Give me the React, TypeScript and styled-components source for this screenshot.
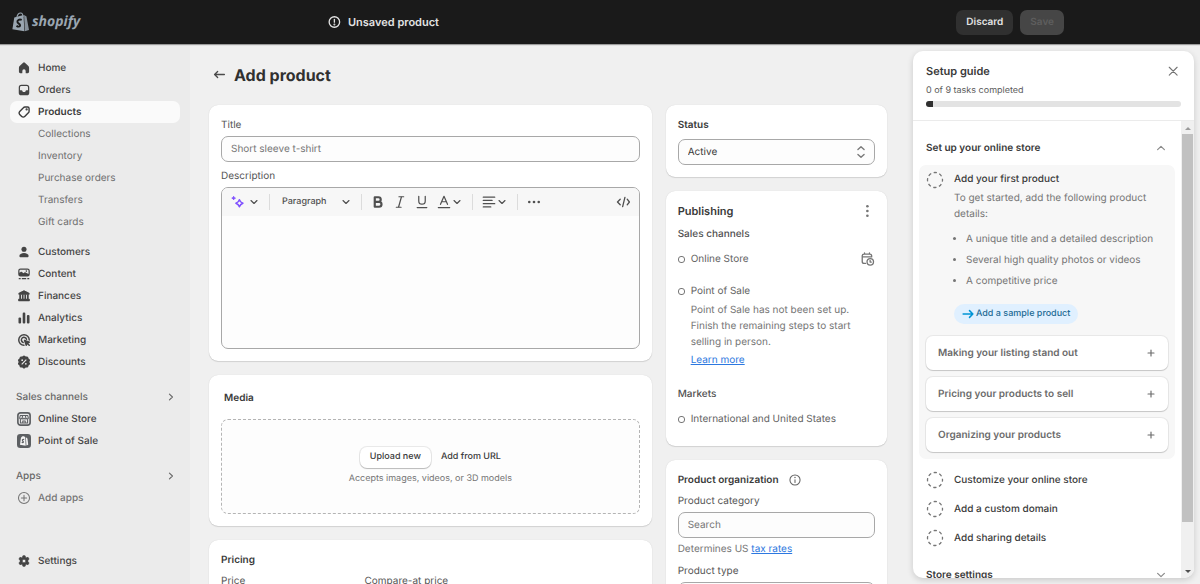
import React from "react";
import styled, { createGlobalStyle, css } from "styled-components";

const Global = createGlobalStyle`
  *, *::before, *::after { box-sizing: border-box; }
  body { margin: 0; background: #f0f0f0; }
  body, button, input, select, textarea {
    font-family: Inter, "Liberation Sans", sans-serif;
    font-size: 10px;
    line-height: 16px;
    color: #3a3a3a;
    text-rendering: geometricPrecision;
  }
  button { border: 0; padding: 0; background: none; cursor: pointer; }
  h1, h2, h3, p, ul { margin: 0; padding: 0; }
  ul { list-style: none; }
`;

/* ---------- Icons ---------- */

const Svg = styled.svg<{ $size?: number }>`
  display: block;
  flex: none;
  width: ${(p) => p.$size ?? 14}px;
  height: ${(p) => p.$size ?? 14}px;
`;

type IconProps = { size?: number };

const Line = ({ size, width = 1.5, children }: IconProps & { width?: number; children: React.ReactNode }) => (
  <Svg $size={size} viewBox="0 0 16 16" fill="none" stroke="currentColor" strokeWidth={width} strokeLinecap="round" strokeLinejoin="round" aria-hidden="true">
    {children}
  </Svg>
);

const Solid = ({ size, children }: IconProps & { children: React.ReactNode }) => (
  <Svg $size={size} viewBox="0 0 16 16" fill="currentColor" aria-hidden="true">
    {children}
  </Svg>
);

const HomeIcon = () => (
  <Solid>
    <path d="M7 2a1.500 1.500 0 0 1 2 0l4 3.800c.5.5.8 1.100.8 1.800v4.700c0 .9-.7 1.600-1.600 1.600h-1.700a.6.6 0 0 1-.6-.6v-1.900a1.900 1.900 0 0 0-3.800 0v1.900a.6.6 0 0 1-.6.6H3.800a1.600 1.600 0 0 1-1.600-1.600V7.600c0-.7.3-1.300.8-1.800z" />
  </Solid>
);

const OrdersIcon = () => (
  <Solid>
    <path fillRule="evenodd" d="M5 2h6a3 3 0 0 1 3 3v6a3 3 0 0 1-3 3H5a3 3 0 0 1-3-3V5a3 3 0 0 1 3-3zM5 3.400c-.9 0-1.600.7-1.600 1.600v3.400h1.700c.5 0 .9.300 1.100.7l.2.500c.2.400.5.600.9.600h1.400c.4 0 .7-.2.900-.6l.2-.5c.2-.4.6-.7 1.100-.7h1.700V5c0-.9-.7-1.600-1.600-1.600z" />
  </Solid>
);

const ProductsIcon = () => (
  <Line width={1.600}>
    <path d="M9 2.300h3.200c.9 0 1.600.7 1.600 1.600V7c0 .7-.3 1.400-.8 1.900l-4.200 4.300a2.400 2.400 0 0 1-3.400 0l-2.300-2.300a2.400 2.400 0 0 1 0-3.400l4.200-4.300c.5-.6 1.100-.9 1.700-.9z" />
    <circle cx="11" cy="5.100" r=".5" fill="currentColor" />
  </Line>
);

const CustomersIcon = () => (
  <Solid>
    <circle cx="8" cy="4.900" r="2.900" />
    <path d="M8 9c3 0 5.300 1.500 5.300 3.500 0 1-.7 1.500-1.700 1.500H4.400c-1 0-1.700-.5-1.700-1.500C2.700 10.500 5 9 8 9z" />
  </Solid>
);

const ContentIcon = () => (
  <Solid>
    <path fillRule="evenodd" d="M4 1.600h8a2.600 2.600 0 0 1 2.600 2.600v4a2.600 2.600 0 0 1-2.600 2.600H4a2.600 2.600 0 0 1-2.600-2.600v-4A2.600 2.600 0 0 1 4 1.600zM4 3c-.7 0-1.200.6-1.200 1.200v2.300l1.400-.9c.5-.3 1-.3 1.500.1l1.600 1.300 1.200-.8c.4-.3.9-.3 1.300 0l3.400 1.700V4.200c0-.6-.5-1.200-1.200-1.200z" />
    <circle cx="10.700" cy="4.700" r=".9" />
    <path d="M2 12.600h2.200V14H2zM5.500 12.600h5V14h-5zM11.800 12.600H14V14h-2.200z" />
  </Solid>
);

const FinancesIcon = () => (
  <Solid>
    <path d="M7.300 1.700c.4-.2 1-.2 1.400 0l5.100 2.700c.4.300.7.700.7 1.100 0 .6-.5 1.100-1.100 1.100H2.600c-.6 0-1.100-.5-1.100-1.100 0-.4.300-.8.700-1.100z" />
    <path d="M2.600 6h2v6h-2zM5.600 6h1.900v6H5.600zM8.500 6h1.900v6H8.500zM11.400 6h2v6h-2z" />
    <path d="M2.100 11.200h11.800c.4 0 .8.400.8.800v1.200c0 .4-.4.800-.8.800H2.100a.8.800 0 0 1-.8-.8V12c0-.4.400-.8.800-.8z" />
  </Solid>
);

const AnalyticsIcon = () => (
  <Solid>
    <rect x="1.700" y="7.500" width="3" height="6.800" rx="1.200" />
    <rect x="6.500" y="1.800" width="3" height="12.500" rx="1.200" />
    <rect x="11.300" y="4.500" width="3" height="9.800" rx="1.200" />
  </Solid>
);

const MarketingIcon = () => (
  <Line width={1.700}>
    <path d="M14 8a6 6 0 1 0-6 6" />
    <path d="M10.900 7.200A3 3 0 1 0 7 10.800" />
    <path d="M8.600 8.400l5.500 2-2.200 1.300-1.300 2.300z" fill="currentColor" />
    <path d="M12.500 12.500l1.500 1.500" />
  </Line>
);

const DiscountsIcon = () => (
  <Solid>
    <path fillRule="evenodd" d="M6.700 1.200a1.900 1.900 0 0 1 2.600 0l.6.600.9-.1a1.900 1.900 0 0 1 2.300 1.700l.1.700.7.500a1.900 1.900 0 0 1 .5 2.700L14 8l.4.700a1.900 1.900 0 0 1-.5 2.700l-.7.5-.1.700a1.900 1.900 0 0 1-2.300 1.700l-.9-.1-.6.600a1.900 1.900 0 0 1-2.600 0l-.6-.6-.9.100a1.900 1.900 0 0 1-2.300-1.700l-.1-.7-.7-.5a1.900 1.900 0 0 1-.5-2.700L2 8l-.4-.7a1.900 1.900 0 0 1 .5-2.700l.7-.5.1-.7a1.900 1.900 0 0 1 2.300-1.700l.9.100zM5.900 4.900a1 1 0 1 0 0 2 1 1 0 0 0 0-2zm4.200 4.200a1 1 0 1 0 0 2 1 1 0 0 0 0-2zm.1-4.200L4.900 10.200l.9.900 5.300-5.300z" />
  </Solid>
);

const StoreBadge = () => (
  <Svg viewBox="0 0 16 16" fill="none" aria-hidden="true">
    <rect x="1" y="1" width="14" height="14" rx="3" fill="#ebebeb" stroke="#5c5f62" strokeWidth="1.900" />
    <path d="M3.800 3.900h8.400l.8 3a1.300 1.300 0 0 1-2.500 0 1.300 1.300 0 0 1-2.500 0 1.300 1.300 0 0 1-2.500 0 1.300 1.300 0 0 1-2.500 0zM3.900 8.300v4.200h8.200V8.300M6.600 12.500v-2.200h2.800v2.200M6.200 3.900v2.700M9.800 3.900v2.700" stroke="#5c5f62" strokeWidth="1.200" strokeLinejoin="round" />
  </Svg>
);

const PosBadge = () => (
  <Svg viewBox="0 0 16 16" aria-hidden="true">
    <rect width="16" height="16" rx="3.800" fill="#5c5f62" />
    <path d="M4.500 4.600C5 3 6.500 2.200 8 2.700l1.400.9.500 9.900-6.500-1.200z" fill="#f4f4f4" />
    <path d="M10.200 3.800l1.700 1.200.9 7.300-2 .9z" fill="#f4f4f4" />
    <path d="M8.200 6.400c-1.300-.7-2.400.1-2 1.100.3.800 1.300 1 1.100 1.800-.2.700-1.200.6-1.900.1" stroke="#5c5f62" strokeWidth="1.300" fill="none" />
  </Svg>
);

const PlusCircleIcon = () => (
  <Line width={1.200}>
    <circle cx="8" cy="8" r="6.300" />
    <path d="M8 5v6M5 8h6" />
  </Line>
);

const GearIcon = () => (
  <Solid>
    <path fillRule="evenodd" d="M6.800 2h2.400l.5 1.700 1.100.6 1.800-.5 1.200 2-1.300 1.300v1.800l1.300 1.300-1.200 2-1.800-.5-1.100.6L9.200 14H6.800l-.5-1.700-1.100-.6-1.800.5-1.200-2 1.300-1.300V7.100L2.200 5.800l1.200-2 1.800.5 1.100-.6zM8 5.900a2.100 2.100 0 1 0 0 4.200 2.100 2.100 0 0 0 0-4.200z" stroke="currentColor" strokeWidth=".8" strokeLinejoin="round" />
  </Solid>
);

const AlertIcon = () => (
  <Line size={14} width={1.500}>
    <circle cx="7.300" cy="8" r="6" />
    <path d="M7.300 5v3.200" />
    <circle cx="7.300" cy="10.800" r=".4" fill="currentColor" />
  </Line>
);

const InfoIcon = () => (
  <Line size={14} width={1.200}>
    <circle cx="8" cy="8" r="5.800" />
    <path d="M8 7.600v3.200" />
    <circle cx="8" cy="5.200" r=".3" fill="currentColor" />
  </Line>
);

const BackIcon = () => (
  <Line size={14} width={1.500}>
    <path d="M13 7.400H2M5.300 4L1.800 7.400l3.500 3.400" />
  </Line>
);

const ChevronDown = ({ size = 10 }: IconProps) => (
  <Line size={size} width={2}>
    <path d="M3.200 5.700L8 10.300l4.800-4.600" />
  </Line>
);

const ChevronUp = ({ size = 12 }: IconProps) => (
  <Line size={size} width={1.600}>
    <path d="M3.500 10.200L8 5.800l4.500 4.400" />
  </Line>
);

const ChevronThinDown = () => (
  <Line size={12} width={1.600}>
    <path d="M3.500 5.800L8 10.200l4.500-4.400" />
  </Line>
);

const ChevronRight = () => (
  <Line size={10} width={1.800}>
    <path d="M5.500 3.500L10.300 8l-4.800 4.500" />
  </Line>
);

const SparkleIcon = () => (
  <Svg $size={14} viewBox="0 0 16 16" fill="none" aria-hidden="true">
    <path d="M9.600 5.400c.8 2.400 1.600 3.200 4 4-2.400.8-3.200 1.600-4 4-.8-2.400-1.600-3.200-4-4 2.400-.8 3.200-1.600 4-4z" stroke="#8051ff" strokeWidth="1.800" strokeLinejoin="round" />
    <path d="M3 1.500c.4 1.300.8 1.700 2.100 2.100C3.800 4 3.400 4.400 3 5.700 2.600 4.400 2.200 4 .9 3.600 2.200 3.200 2.600 2.800 3 1.500z" fill="#8051ff" stroke="#8051ff" strokeWidth="1" strokeLinejoin="round" />
  </Svg>
);

const BoldIcon = () => (
  <Line size={14} width={2.500}>
    <path d="M4.300 2.600h4.200a2.600 2.600 0 0 1 0 5.200H4.300zM4.300 7.800h4.900a2.800 2.800 0 0 1 0 5.600H4.300z" />
  </Line>
);

const ItalicIcon = () => (
  <Line size={14} width={1.400}>
    <path d="M6.800 2h5.400M3.800 14h5.400M9.700 2L6.300 14" />
  </Line>
);

const UnderlineIcon = () => (
  <Line size={14} width={1.400}>
    <path d="M4.300 1.500v5.300a3.700 3.700 0 0 0 7.400 0V1.500M2.500 14.300h11" />
  </Line>
);

const TextColorIcon = () => (
  <Line size={14} width={1.400}>
    <path d="M4 10.700l4-9.200 4 9.200M5.300 7.700h5.400M1.500 14.300h13" />
  </Line>
);

const AlignIcon = () => (
  <Line size={14} width={1.500}>
    <path d="M1.500 2.500h13M1.500 6.200h10M1.500 9.900h13M1.500 13.600h8.500" />
  </Line>
);

const MoreIcon = () => (
  <Solid size={14}>
    <circle cx="2.600" cy="8" r="1.500" />
    <circle cx="8" cy="8" r="1.500" />
    <circle cx="13.400" cy="8" r="1.500" />
  </Solid>
);

const KebabIcon = () => (
  <Solid size={14}>
    <circle cx="7.300" cy="2.600" r="1.500" />
    <circle cx="7.300" cy="8" r="1.500" />
    <circle cx="7.300" cy="13.400" r="1.500" />
  </Solid>
);

const CodeIcon = () => (
  <Line size={14} width={1.500}>
    <path d="M4.800 4.800L1.700 8l3.100 3.200M12.800 4.800L15.300 8l-2.500 3.200M10.200 2.800L7.600 13.200" />
  </Line>
);

const CalendarClockIcon = () => (
  <Line size={14} width={1.500}>
    <path d="M5.200 13H3.600a2.200 2.200 0 0 1-2.200-2.200V4.700c0-1.200 1-2.200 2.200-2.200h6.400c1.200 0 2.200 1 2.200 2.200v.6M1.400 5.600h10.800M4 1v1.500M9.700 1v1.500" />
    <circle cx="10.600" cy="11.200" r="3.700" />
    <path d="M10.400 9.500v2h1.400" />
  </Line>
);

const SelectArrows = () => (
  <Line size={14} width={1.600}>
    <path d="M4.500 5.200L8 1.900l3.500 3.300M4.500 10.800L8 14.100l3.500-3.300" />
  </Line>
);

const CloseIcon = () => (
  <Line size={12} width={1.500}>
    <path d="M3 3l10.500 10.500M13.500 3L3 13.500" />
  </Line>
);

const PlusIcon = () => (
  <Line size={8} width={2.300}>
    <path d="M8 2v12M2 8h12" />
  </Line>
);

const ArrowRightIcon = () => (
  <Line size={12} width={2}>
    <path d="M1.500 8h13M10 3.500L14.500 8 10 12.500" />
  </Line>
);

const DashedCircle = () => (
  <Svg $size={18} viewBox="0 0 18 18" fill="none" aria-hidden="true">
    <circle cx="9" cy="9" r="7.500" stroke="#767676" strokeWidth="1.300" strokeDasharray="3.300 2.590" strokeDashoffset="1.600" strokeLinecap="butt" />
  </Svg>
);

/* ---------- Top bar ---------- */

const TopBar = styled.header`
  display: flex;
  flex: none;
  height: 44px;
  background: #1a1a1a;
  box-shadow: 0 1px 1px rgba(0, 0, 0, 0.35);
  z-index: 1;
`;

const Brand = styled.a`
  display: flex;
  align-items: center;
  gap: 1px;
  width: 190px;
  padding-left: 11px;
  color: #9aa6b1;
  text-decoration: none;
`;

const BrandName = styled.span`
  font: italic 700 14px/20px "Open Sans", sans-serif;
`;

const SaveBarSlot = styled.div`
  flex: 1;
  padding: 0 136px 0 138px;
`;

const SaveBar = styled.div`
  display: flex;
  align-items: center;
  gap: 7px;
  height: 100%;
  max-width: 736px;
  margin: 0 auto;
`;

const SaveTitle = styled.strong`
  display: flex;
  align-items: center;
  gap: 6px;
  margin-right: auto;
  font-size: 11px;
  font-weight: 600;
  color: #e3e3e3;
`;

const BarButton = styled.button<{ $muted?: boolean }>`
  height: 25px;
  padding: 0 10px;
  border-radius: 7px;
  font-weight: 600;
  background: ${(p) => (p.$muted ? "#464646" : "#303030")};
  color: ${(p) => (p.$muted ? "#5e5e5e" : "#e3e3e3")};
`;

/* ---------- Frame ---------- */

const Frame = styled.div`
  display: flex;
  flex-direction: column;
  height: 100vh;
  overflow: hidden;
`;

const Body = styled.div`
  display: flex;
  flex: 1;
  min-height: 0;
`;

/* ---------- Sidebar ---------- */

const Sidebar = styled.nav`
  display: flex;
  flex: none;
  flex-direction: column;
  width: 190px;
  padding: 13px 10px 12px;
  background: #ebebeb;
  overflow: hidden;
`;

const NavGroup = styled.ul<{ $gap?: number }>`
  margin-top: ${(p) => p.$gap ?? 0}px;
`;

const NavLink = styled.a<{ $active?: boolean; $sub?: boolean; $muted?: boolean }>`
  display: flex;
  align-items: center;
  gap: 7px;
  height: 22px;
  padding-left: ${(p) => (p.$sub ? 28 : 7)}px;
  border-radius: 7px;
  font-weight: 500;
  text-decoration: none;
  color: #444;
  ${(p) => p.$active && css`background: #fafafa; font-weight: 600; color: #3a3a3a;`}
  ${(p) => p.$sub && css`font-weight: 400; color: #6f6f6f;`}
  ${(p) => p.$muted && css`color: #757575;`}
`;

const NavHeading = styled.button`
  display: flex;
  align-items: center;
  justify-content: space-between;
  width: 100%;
  height: 22px;
  padding: 0 4px 0 6px;
  margin-top: 13px;
  font-weight: 500;
  color: #686868;
`;

const SidebarFooter = styled.div`
  margin-top: auto;
`;

/* ---------- Page ---------- */

const Page = styled.main`
  flex: 1;
  min-width: 0;
  padding: 20px 26px 0 19px;
  overflow: hidden;
`;

const PageHeader = styled.div`
  display: flex;
  align-items: center;
  gap: 7px;
  height: 22px;
  margin-bottom: 19px;
  padding-left: 4px;
  color: #4a4a4a;
`;

const PageTitle = styled.h1`
  font-size: 16px;
  line-height: 22px;
  font-weight: 700;
  color: #303030;
`;

const Columns = styled.div`
  display: grid;
  grid-template-columns: minmax(0, 2fr) minmax(0, 1fr);
  gap: 14px;
`;

const Column = styled.div`
  display: flex;
  flex-direction: column;
  gap: 14px;
`;

const Card = styled.section`
  padding: 12px;
  border-radius: 9px;
  background: #fff;
  box-shadow: 0 1px 1px rgba(0, 0, 0, 0.12), 0 0 1px rgba(0, 0, 0, 0.15);
`;

const Field = styled.div`
  display: flex;
  flex-direction: column;
  gap: 3px;
`;

const Fields = styled.div`
  display: flex;
  flex-direction: column;
  gap: 6px;
`;

const Label = styled.label`
  color: #555;
`;

const inputBox = css`
  width: 100%;
  height: 26px;
  padding: 0 9px;
  border: 1px solid #a8a8a8;
  border-radius: 7px;
  background: #fdfdfd;
  outline: 0;
`;

const TextInput = styled.input`
  ${inputBox}

  &::placeholder {
    color: #767676;
    opacity: 1;
  }
`;

const Editor = styled.div`
  display: flex;
  flex-direction: column;
  border: 1px solid #a8a8a8;
  border-radius: 7px;
  background: #fdfdfd;
  overflow: hidden;
`;

const Toolbar = styled.div`
  display: flex;
  align-items: center;
  height: 28px;
  padding: 0 9px;
  background: #f7f7f7;
  color: #505050;
`;

const ToolButton = styled.button<{ $gap?: number; $first?: boolean; $wide?: boolean }>`
  display: flex;
  align-items: center;
  gap: ${(p) => p.$gap ?? 1}px;
  margin-left: ${(p) => (p.$first ? 0 : 8)}px;
  padding-left: ${(p) => (p.$wide ? 3 : 0)}px;
  font-size: 9px;
  font-weight: 500;
  color: inherit;
`;

const ToolDivider = styled.span`
  width: 1px;
  height: 16px;
  margin: 0 1px 0 10px;
  background: #dcdcdc;
`;

const ToolSpacer = styled.span`
  flex: 1;
`;

const EditorArea = styled.textarea`
  height: 132px;
  padding: 8px 10px;
  border: 0;
  background: transparent;
  resize: none;
  outline: 0;
`;

const CardTitle = styled.h2<{ $inset?: boolean; $large?: boolean }>`
  font-size: ${(p) => (p.$large ? 11 : 10)}px;
  line-height: 16px;
  font-weight: 600;
  color: #3a3a3a;
  padding: ${(p) => (p.$inset ? "3px 3px 0" : "0")};
`;

const DropZone = styled.div`
  display: flex;
  flex-direction: column;
  align-items: center;
  justify-content: center;
  gap: 3px;
  height: 95px;
  margin-top: 13px;
  border: 1px dashed #b4b4b4;
  border-radius: 7px;
  background: #fdfdfd;
  color: #757575;
  font-size: 9px;
`;

const DropActions = styled.div`
  display: flex;
  align-items: center;
  gap: 10px;
`;

const UploadButton = styled.button`
  height: 21px;
  padding: 0 10px;
  border-radius: 7px;
  background: #fff;
  box-shadow: 0 1px 1px rgba(0, 0, 0, 0.2), 0 0 0 1px rgba(0, 0, 0, 0.08);
  font-size: 9px;
  font-weight: 500;
`;

const PlainButton = styled.button`
  font-size: 9px;
  font-weight: 500;
`;

const PriceRow = styled.div`
  display: grid;
  grid-template-columns: repeat(3, minmax(0, 1fr));
  gap: 12px;
  margin-top: 5px;
`;

const SelectWrap = styled.div`
  display: grid;
  align-items: center;
  margin-top: 6px;

  & > * {
    grid-area: 1 / 1;
  }

  & > svg {
    justify-self: end;
    margin-right: 7px;
    color: #7a7a7a;
    pointer-events: none;
  }
`;

const Select = styled.select`
  ${inputBox}
  appearance: none;
`;

const Between = styled.div`
  display: flex;
  align-items: center;
  justify-content: space-between;
`;

const SubHeading = styled.h3<{ $top: number }>`
  margin-top: ${(p) => p.$top}px;
  font-size: 10px;
  line-height: 16px;
  font-weight: 500;
  color: #505050;
`;

const Channel = styled.div<{ $top: number }>`
  display: grid;
  grid-template-columns: 7px 1fr auto;
  column-gap: 6px;
  align-items: center;
  margin-top: ${(p) => p.$top}px;
  color: #636363;
`;

const Ring = styled.span`
  width: 7px;
  height: 7px;
  border: 1px solid #767676;
  border-radius: 3px;
`;

const ChannelNote = styled.p`
  grid-column: 2 / 4;
  margin-top: 3px;
  color: #757575;
`;

const ChannelAction = styled.p`
  grid-column: 2 / 4;
  margin-top: 2px;
`;

const Link = styled.a`
  color: #2d78e0;
`;

const PublishingCard = styled(Card)`
  padding-bottom: 19px;
`;

const TitleWithIcon = styled.div`
  display: flex;
  align-items: center;
  gap: 9px;
  margin-bottom: 5px;
  color: #636363;
`;

const Help = styled.p`
  color: #757575;
`;

/* ---------- Setup guide ---------- */

const Guide = styled.aside`
  display: flex;
  flex: none;
  flex-direction: column;
  width: 281px;
  margin: 7px 6px 6px 0;
  border-radius: 10px;
  background: #fff;
  box-shadow: 0 2px 6px rgba(0, 0, 0, 0.16);
  overflow: hidden;
`;

const GuideHeader = styled.div`
  padding: 12px 13px 13px;
  border-bottom: 1px solid #ebebeb;
`;

const GuideTitle = styled.h2`
  font-size: 11px;
  line-height: 16px;
  font-weight: 600;
`;

const IconButton = styled.button<{ $pad?: number }>`
  padding: ${(p) => p.$pad ?? 0}px;
  color: #757575;
`;

const GuideCount = styled.p`
  margin-top: 4px;
  font-size: 9px;
  color: #5c5c5c;
`;

const Progress = styled.div`
  height: 6px;
  margin-top: 2px;
  border-radius: 3px;
  background: #e3e3e3;
  overflow: hidden;
`;

const ProgressFill = styled.div`
  width: 7px;
  height: 100%;
  background: #303030;
`;

const GuideBody = styled.div`
  display: flex;
  flex: 1;
  min-height: 0;
`;

const GuideScroll = styled.div`
  flex: 1;
  padding: 19px 6px 13px;
  overflow-y: auto;
  scrollbar-width: none;
`;

const Rail = styled.div`
  display: flex;
  flex-direction: column;
  align-items: center;
  justify-content: space-between;
  width: 13px;
  padding: 6px 1px 5px;
  background: #f0f0f0;
`;

const RailArrow = styled.span<{ $down?: boolean }>`
  border: 3px solid transparent;
  ${(p) =>
    p.$down
      ? css`border-top-color: #505050; border-bottom: 0;`
      : css`border-bottom-color: #9a9a9a; border-top: 0;`}
`;

const RailThumb = styled.span`
  width: 11px;
  height: 87%;
  margin: 4px 0 auto;
  background: #c1c1c1;
`;

const SectionToggle = styled.button`
  display: flex;
  align-items: center;
  justify-content: space-between;
  width: 100%;
  padding: 0 8px 0 7px;
  font-weight: 600;

  & > svg {
    color: #8a8a8a;
  }
`;

const ActiveTask = styled.div`
  margin-top: 9px;
  padding: 6px 7px 7px;
  border-radius: 7px;
  background: #f7f7f7;
`;

const TaskGrid = styled.div`
  display: grid;
  grid-template-columns: 18px 1fr;
  column-gap: 10px;
`;

const TaskName = styled.h3`
  font-size: 10px;
  line-height: 16px;
  font-weight: 500;
`;

const TaskDetail = styled.div`
  grid-column: 2;
  margin-top: 1px;
  color: #757575;
`;

const Bullets = styled.ul`
  display: grid;
  gap: 5px;
  margin-top: 9px;
  padding-left: 12px;
  list-style: disc;
`;

const SampleButton = styled.button`
  display: flex;
  align-items: center;
  gap: 2px;
  height: 20px;
  margin-top: 15px;
  padding: 0 8px;
  border-radius: 10px;
  background: #e0f0ff;
  font-size: 9px;
  font-weight: 500;
  color: #1c6a94;

  & > svg {
    color: #0094d5;
  }
`;

const TipList = styled.ul`
  display: grid;
  gap: 7px;
  margin-top: 12px;
`;

const Tip = styled.button`
  display: flex;
  align-items: center;
  justify-content: space-between;
  width: 100%;
  height: 34px;
  padding: 0 13px 0 12px;
  border-radius: 7px;
  background: #fff;
  box-shadow: 0 1px 1px rgba(0, 0, 0, 0.15), 0 0 0 1px rgba(0, 0, 0, 0.06);
  font-weight: 600;
  color: #6b6b6b;
`;

const TaskList = styled.ul`
  margin: 6px 0 15px;
`;

const Task = styled.button`
  display: flex;
  align-items: center;
  gap: 10px;
  width: 100%;
  height: 29px;
  padding: 0 7px;
  font-weight: 500;
`;

/* ---------- Data ---------- */

const products = ["Collections", "Inventory", "Purchase orders", "Transfers", "Gift cards"];

const secondary: [string, React.FC][] = [
  ["Customers", CustomersIcon],
  ["Content", ContentIcon],
  ["Finances", FinancesIcon],
  ["Analytics", AnalyticsIcon],
  ["Marketing", MarketingIcon],
  ["Discounts", DiscountsIcon],
];

const NavItem = ({ label, icon: Icon, ...rest }: { label: string; icon?: React.FC; $active?: boolean; $sub?: boolean; $muted?: boolean }) => (
  <li>
    <NavLink href="#" {...rest}>
      {Icon && <Icon />}
      {label}
    </NavLink>
  </li>
);

const Logo = () => (
  <Svg $size={20} viewBox="0 0 20 20" aria-hidden="true">
    <path d="M3.300 5.400l9.200-2.500.9 16.300L1.400 17.200z" fill="currentColor" />
    <path d="M13.100 3.100l2.400 1.300 2.500 13.500-4.100 1.300z" fill="currentColor" opacity=".85" />
    <path d="M5.800 6c.4-3 2-5 3.900-5 1.700 0 2.300 2 2.300 4" fill="none" stroke="currentColor" strokeWidth="1.100" />
    <path d="M10.700 7.900C8.500 6.900 6.200 8 6.400 9.900c.2 1.700 2.900 1.900 2.700 3.600-.1 1.400-1.900 1.500-3.600.4" fill="none" stroke="#1a1a1a" strokeWidth="1.900" />
  </Svg>
);

export default function App() {
  return (
    <Frame>
      <Global />
      <TopBar>
        <Brand href="#">
          <Logo />
          <BrandName>shopify</BrandName>
        </Brand>
        <SaveBarSlot>
          <SaveBar>
            <SaveTitle>
              <AlertIcon />
              Unsaved product
            </SaveTitle>
            <BarButton>Discard</BarButton>
            <BarButton $muted disabled>Save</BarButton>
          </SaveBar>
        </SaveBarSlot>
      </TopBar>

      <Body>
        <Sidebar>
          <NavGroup>
            <NavItem label="Home" icon={HomeIcon} />
            <NavItem label="Orders" icon={OrdersIcon} />
            <NavItem label="Products" icon={ProductsIcon} $active />
            {products.map((p) => (
              <NavItem key={p} label={p} $sub />
            ))}
          </NavGroup>
          <NavGroup $gap={8}>
            {secondary.map(([label, icon]) => (
              <NavItem key={label} label={label} icon={icon} />
            ))}
          </NavGroup>
          <NavHeading>
            Sales channels
            <ChevronRight />
          </NavHeading>
          <NavGroup>
            <NavItem label="Online Store" icon={StoreBadge} />
            <NavItem label="Point of Sale" icon={PosBadge} />
          </NavGroup>
          <NavHeading>
            Apps
            <ChevronRight />
          </NavHeading>
          <NavGroup>
            <NavItem label="Add apps" icon={PlusCircleIcon} $muted />
          </NavGroup>
          <SidebarFooter>
            <NavLink href="#">
              <GearIcon />
              Settings
            </NavLink>
          </SidebarFooter>
        </Sidebar>

        <Page>
          <PageHeader>
            <BackIcon />
            <PageTitle>Add product</PageTitle>
          </PageHeader>
          <Columns>
            <Column>
              <Card>
                <Fields>
                  <Field>
                    <Label htmlFor="title">Title</Label>
                    <TextInput id="title" placeholder="Short sleeve t-shirt" />
                  </Field>
                  <Field>
                    <Label htmlFor="description">Description</Label>
                    <Editor>
                      <Toolbar>
                        <ToolButton $first $gap={4} aria-label="Generate text">
                          <SparkleIcon />
                          <ChevronDown />
                        </ToolButton>
                        <ToolDivider />
                        <ToolButton $gap={14} $wide>
                          Paragraph
                          <ChevronDown />
                        </ToolButton>
                        <ToolDivider />
                        <ToolButton aria-label="Bold"><BoldIcon /></ToolButton>
                        <ToolButton aria-label="Italic"><ItalicIcon /></ToolButton>
                        <ToolButton aria-label="Underline"><UnderlineIcon /></ToolButton>
                        <ToolButton aria-label="Text color">
                          <TextColorIcon />
                          <ChevronDown />
                        </ToolButton>
                        <ToolDivider />
                        <ToolButton aria-label="Alignment">
                          <AlignIcon />
                          <ChevronDown />
                        </ToolButton>
                        <ToolDivider />
                        <ToolButton aria-label="More"><MoreIcon /></ToolButton>
                        <ToolSpacer />
                        <ToolButton aria-label="Show HTML"><CodeIcon /></ToolButton>
                      </Toolbar>
                      <EditorArea id="description" />
                    </Editor>
                  </Field>
                </Fields>
              </Card>

              <Card>
                <CardTitle $inset>Media</CardTitle>
                <DropZone>
                  <DropActions>
                    <UploadButton>Upload new</UploadButton>
                    <PlainButton>Add from URL</PlainButton>
                  </DropActions>
                  <p>Accepts images, videos, or 3D models</p>
                </DropZone>
              </Card>

              <Card>
                <CardTitle>Pricing</CardTitle>
                <PriceRow>
                  <Field>
                    <Label htmlFor="price">Price</Label>
                    <TextInput id="price" />
                  </Field>
                  <Field>
                    <Label htmlFor="compare">Compare-at price</Label>
                    <TextInput id="compare" />
                  </Field>
                </PriceRow>
              </Card>
            </Column>

            <Column>
              <Card>
                <CardTitle as="label" htmlFor="status">Status</CardTitle>
                <SelectWrap>
                  <Select id="status" defaultValue="Active">
                    <option>Active</option>
                    <option>Draft</option>
                  </Select>
                  <SelectArrows />
                </SelectWrap>
              </Card>

              <PublishingCard>
                <Between>
                  <CardTitle $large>Publishing</CardTitle>
                  <IconButton aria-label="Publishing options"><KebabIcon /></IconButton>
                </Between>
                <SubHeading $top={7}>Sales channels</SubHeading>
                <Channel $top={9}>
                  <Ring />
                  Online Store
                  <IconButton aria-label="Schedule"><CalendarClockIcon /></IconButton>
                </Channel>
                <Channel $top={16}>
                  <Ring />
                  Point of Sale
                  <ChannelNote>
                    Point of Sale has not been set up. Finish the remaining steps to start selling in person.
                  </ChannelNote>
                  <ChannelAction><Link href="#">Learn more</Link></ChannelAction>
                </Channel>
                <SubHeading $top={18}>Markets</SubHeading>
                <Channel $top={9}>
                  <Ring />
                  International and United States
                </Channel>
              </PublishingCard>

              <Card>
                <TitleWithIcon>
                  <CardTitle>Product organization</CardTitle>
                  <InfoIcon />
                </TitleWithIcon>
                <Fields>
                  <Field>
                    <Label htmlFor="category">Product category</Label>
                    <TextInput id="category" placeholder="Search" />
                    <Help>Determines US <Link href="#">tax rates</Link></Help>
                  </Field>
                  <Field>
                    <Label htmlFor="type">Product type</Label>
                    <TextInput id="type" />
                  </Field>
                </Fields>
              </Card>
            </Column>
          </Columns>
        </Page>

        <Guide>
          <GuideHeader>
            <Between>
              <GuideTitle>Setup guide</GuideTitle>
              <IconButton aria-label="Close" $pad={2}><CloseIcon /></IconButton>
            </Between>
            <GuideCount>0 of 9 tasks completed</GuideCount>
            <Progress>
              <ProgressFill />
            </Progress>
          </GuideHeader>
          <GuideBody>
            <GuideScroll>
              <SectionToggle>
                Set up your online store
                <ChevronUp />
              </SectionToggle>
              <ActiveTask>
                <TaskGrid>
                  <DashedCircle />
                  <TaskName>Add your first product</TaskName>
                  <TaskDetail>
                    <p>To get started, add the following product details:</p>
                    <Bullets>
                      <li>A unique title and a detailed description</li>
                      <li>Several high quality photos or videos</li>
                      <li>A competitive price</li>
                    </Bullets>
                    <SampleButton>
                      <ArrowRightIcon />
                      Add a sample product
                    </SampleButton>
                  </TaskDetail>
                </TaskGrid>
                <TipList>
                  {["Making your listing stand out", "Pricing your products to sell", "Organizing your products"].map((t) => (
                    <li key={t}>
                      <Tip>
                        {t}
                        <PlusIcon />
                      </Tip>
                    </li>
                  ))}
                </TipList>
              </ActiveTask>
              <TaskList>
                {["Customize your online store", "Add a custom domain", "Add sharing details"].map((t) => (
                  <li key={t}>
                    <Task>
                      <DashedCircle />
                      {t}
                    </Task>
                  </li>
                ))}
              </TaskList>
              <SectionToggle>
                Store settings
                <ChevronThinDown />
              </SectionToggle>
            </GuideScroll>
            <Rail aria-hidden="true">
              <RailArrow />
              <RailThumb />
              <RailArrow $down />
            </Rail>
          </GuideBody>
        </Guide>
      </Body>
    </Frame>
  );
}
